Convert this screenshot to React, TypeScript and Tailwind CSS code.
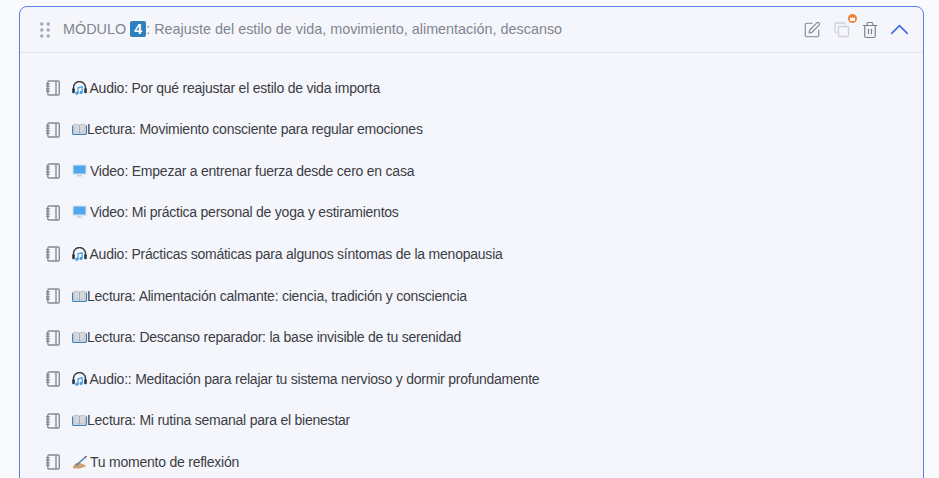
import { ChevronUp, SquarePen, Trash2 } from "lucide-react";

type Kind = "audio" | "book" | "video" | "write";

const lessons: { kind: Kind; text: string }[] = [
  { kind: "audio", text: "Audio: Por qué reajustar el estilo de vida importa" },
  { kind: "book", text: "Lectura: Movimiento consciente para regular emociones" },
  { kind: "video", text: "Video: Empezar a entrenar fuerza desde cero en casa" },
  { kind: "video", text: "Video: Mi práctica personal de yoga y estiramientos" },
  { kind: "audio", text: "Audio: Prácticas somáticas para algunos síntomas de la menopausia" },
  { kind: "book", text: "Lectura: Alimentación calmante: ciencia, tradición y consciencia" },
  { kind: "book", text: "Lectura: Descanso reparador: la base invisible de tu serenidad" },
  { kind: "audio", text: "Audio:: Meditación para relajar tu sistema nervioso y dormir profundamente" },
  { kind: "book", text: "Lectura: Mi rutina semanal para el bienestar" },
  { kind: "write", text: "Tu momento de reflexión" },
];

function Notebook() {
  return (
    <svg width="16" height="16" viewBox="0 0 16 16" fill="none" stroke="#858b99" strokeWidth="1.4" className="shrink-0">
      <rect x="2.800" y="1" width="11.500" height="14" rx="1.200" />
      <path d="M11 1v14M1 3.800h3.600M1 6.300h3.600M1 8.800h3.600M1 11.300h3.600" />
    </svg>
  );
}

function Emoji({ kind }: { kind: Kind }) {
  if (kind === "audio") {
    return (
      <svg width="15" height="15" viewBox="0 0 15 15" fill="none" className="shrink-0">
        <path d="M1.500 9V6.500a6 6 0 0 1 12 0V9" stroke="#3b4048" strokeWidth="1.500" />
        <rect x="0.200" y="7.200" width="2.600" height="5" rx="1" fill="#2f343b" />
        <rect x="12.200" y="7.200" width="2.600" height="5" rx="1" fill="#2f343b" />
        <path d="M6 12V6.800l4.200-1v5.400" stroke="#3f9fe8" strokeWidth="1.200" />
        <circle cx="4.900" cy="12.200" r="1.600" fill="#3f9fe8" />
        <circle cx="9.100" cy="11.400" r="1.600" fill="#3f9fe8" />
      </svg>
    );
  }
  if (kind === "book") {
    return (
      <svg width="15" height="15" viewBox="0 0 15 15" fill="none" className="shrink-0">
        <path d="M0.600 3.500v7.800a1 1 0 0 0 1 1h11.800a1 1 0 0 0 1-1V3.500" stroke="#3f7fb5" strokeWidth="1.200" />
        <path d="M1.800 2.500c2-.5 4-.4 5.700.6 1.700-1 3.700-1.100 5.700-.6v8c-2-.3-4-.2-5.700.6-1.700-.8-3.700-.9-5.700-.6z" fill="#d5d9de" stroke="#9aa3ad" strokeWidth="0.500" />
        <path d="M7.500 3.100v8" stroke="#87919c" strokeWidth="0.600" />
      </svg>
    );
  }
  if (kind === "video") {
    return (
      <svg width="15" height="15" viewBox="0 0 15 15" fill="none" className="shrink-0">
        <rect x="0.500" y="0.500" width="14" height="10.500" rx="0.800" fill="#dde3e8" />
        <rect x="1.500" y="1.500" width="12" height="8" fill="#4fa8ee" />
        <rect x="5.500" y="11" width="4" height="1.400" fill="#c5ccd3" />
        <rect x="3.800" y="12.300" width="7.400" height="1.100" fill="#e2e6ea" />
      </svg>
    );
  }
  return (
    <svg width="15" height="15" viewBox="0 0 15 15" fill="none" className="shrink-0">
      <path d="M0.800 13c.4-2.800 2.400-5 4.800-5.300 2.200-.3 4.400.9 7.400 2.400.9.500.6 1.900-.5 2-1.800.2-3 1.400-5.200 1.400-2.300 0-5 .3-6.500-.5z" fill="#cfa176" />
      <path d="M4 10.500 13 2.500" stroke="#4a7fb5" strokeWidth="1.500" />
      <path d="M13 2.500 14.500 1.200" stroke="#2d4f73" strokeWidth="1.500" />
    </svg>
  );
}

function LessonRow({ kind, text }: { kind: Kind; text: string }) {
  const gap = kind === "book" ? "gap-0" : kind === "audio" ? "gap-[2.500px]" : "gap-[3px]";
  return (
    <li className="flex h-[41.6px] items-center pl-[25px]">
      <Notebook />
      <div className={`ml-[11px] flex items-center ${gap}`}>
        <Emoji kind={kind} />
        <span className="text-[14px] tracking-[-0.23px] text-[#3b3d45]">{text}</span>
      </div>
    </li>
  );
}

export default function App() {
  return (
    <div className="h-[478px] overflow-hidden bg-[#f9fafc] pl-[19px] pr-[15px] pt-[6px] font-['Liberation_Sans',Arial,sans-serif]">
      <section className="h-[600px] rounded-t-lg border border-[#5b7ff0] bg-[#f5f6fb]">
        {/* Header */}
        <header className="flex h-[46px] items-center border-b border-[#e1e3ec] pl-[20px] pr-[8px]">
          <svg width="10" height="16" viewBox="0 0 10 16" fill="#a3a7b2" className="shrink-0">
            <circle cx="1.800" cy="2" r="1.700" />
            <circle cx="8.200" cy="2" r="1.700" />
            <circle cx="1.800" cy="8" r="1.700" />
            <circle cx="8.200" cy="8" r="1.700" />
            <circle cx="1.800" cy="14" r="1.700" />
            <circle cx="8.200" cy="14" r="1.700" />
          </svg>
          <h2 className="ml-[13px] flex items-center text-[14.400px] text-[#82858f]">
            MÓDULO
            <span className="ml-[4px] flex h-[16px] w-[16px] items-center justify-center rounded-[2px] bg-[#2f7fbf] text-[14px] font-bold text-white">
              4
            </span>
            <span className="whitespace-pre">: Reajuste del estilo de vida, movimiento, alimentación, descanso</span>
          </h2>
          <div className="ml-auto flex items-center">
            <SquarePen size={18} strokeWidth={1.500} className="text-[#858995]" />
            <div className="relative ml-[13px]">
              <svg width="16" height="16" viewBox="0 0 16 16" fill="none" stroke="#d0d2d8" strokeWidth="1.300">
                <rect x="4.500" y="4.500" width="10" height="10" rx="1" />
                <path d="M11 2.800V2a1 1 0 0 0-1-1H2a1 1 0 0 0-1 1v7.500a1 1 0 0 0 1 1h.7" />
              </svg>
              <span className="absolute -right-[7px] -top-[8px] flex h-[9px] w-[9px] items-end justify-center rounded-full bg-[#ee8338] pb-[2px]">
                <svg width="5" height="4" viewBox="0 0 5 4" fill="#ffffff">
                  <path d="M0 0l1.250 1.400L2.500 0l1.250 1.400L5 0v4H0z" />
                </svg>
              </span>
            </div>
            <Trash2 size={18} strokeWidth={1.600} className="ml-[11px] text-[#7d818c]" />
            <ChevronUp size={31} strokeWidth={1.300} className="ml-[5px] text-[#4a6cf0]" />
          </div>
        </header>

        {/* Lessons */}
        <ul className="pt-[14.300px]">
          {lessons.map((lesson) => (
            <LessonRow key={lesson.text} kind={lesson.kind} text={lesson.text} />
          ))}
        </ul>
      </section>
    </div>
  );
}
